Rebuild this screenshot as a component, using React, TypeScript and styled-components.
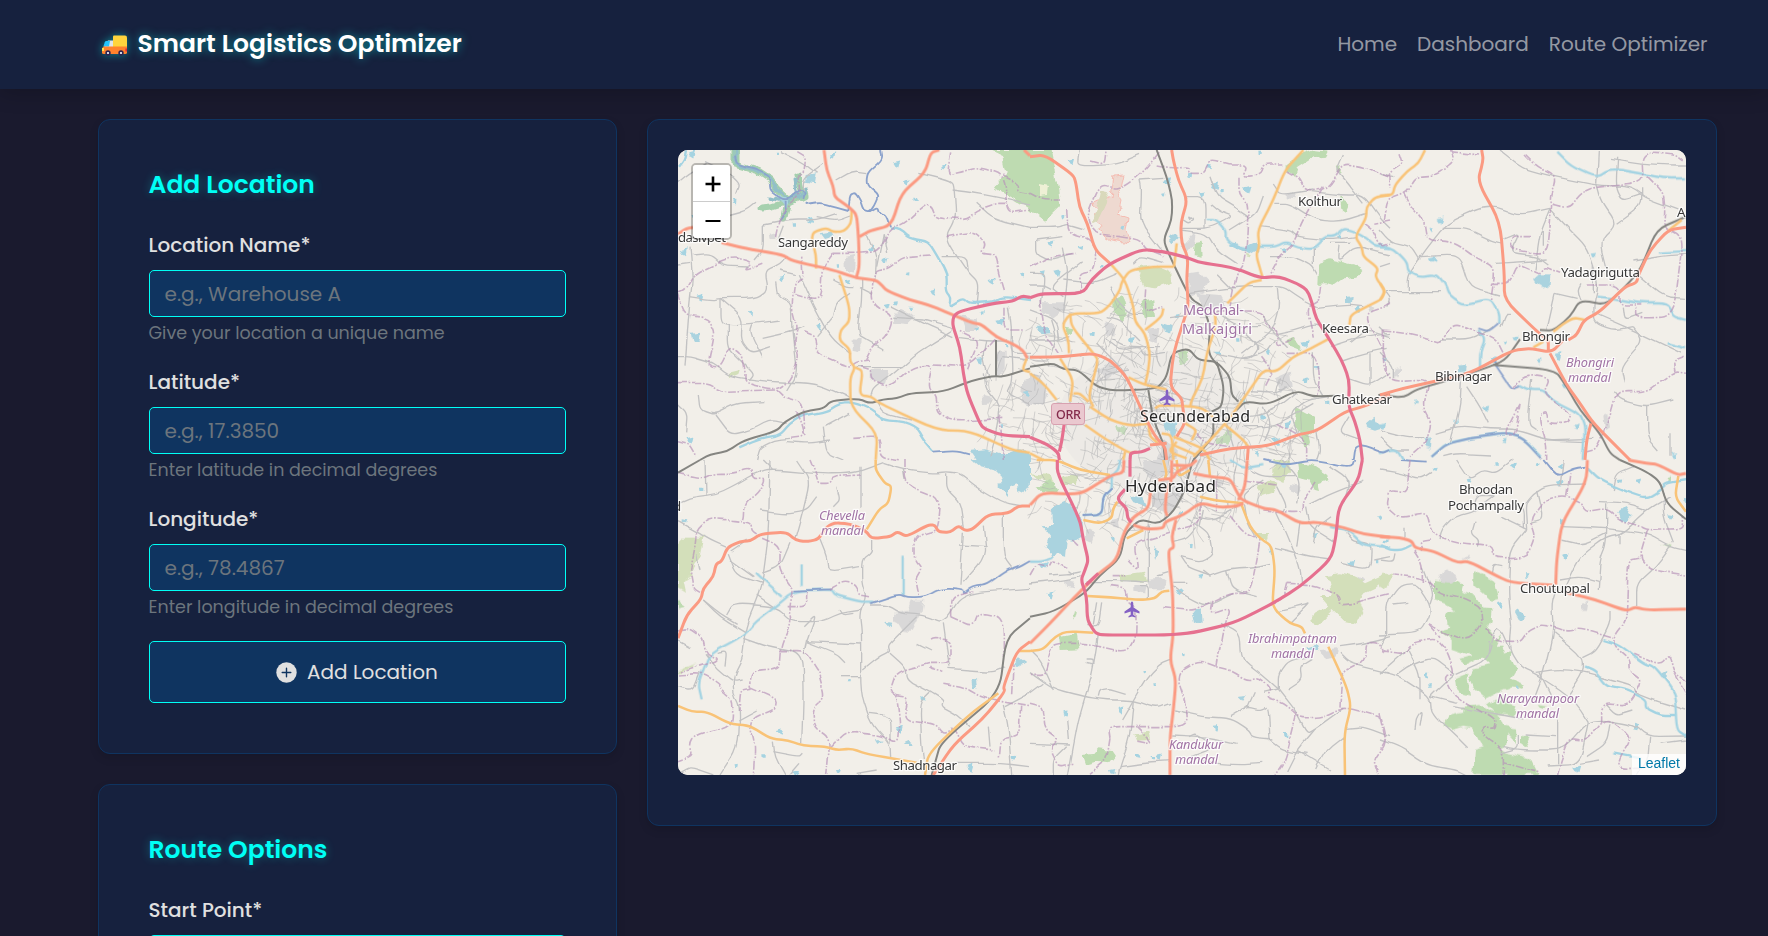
import React from 'react';
import styled, { createGlobalStyle } from 'styled-components';

const GlobalStyle = createGlobalStyle`
  *, *::before, *::after { box-sizing: border-box; }
  html, body { margin: 0; height: 100%; overflow: hidden; }
  body {
    background: #1a1a2e;
    color: #e0e0e0;
    font-family: Poppins, Inter, sans-serif;
    font-size: 20px;
    line-height: 30px;
  }
`;

const Page = styled.div`
  height: 936px;
  overflow: hidden;
  background: #1a1a2e;
`;

const Header = styled.header`
  display: flex;
  align-items: center;
  justify-content: space-between;
  height: 89px;
  padding: 0 60.5px 2px 101px;
  background: #16213e;
  box-shadow: 0 4px 20px rgba(0, 0, 0, 0.2);
`;

const Brand = styled.div`
  display: flex;
  align-items: center;
  gap: 9.5px;
  color: #fff;
  font-size: 25px;
  font-weight: 600;
  white-space: nowrap;
  text-shadow: 0 0 10px rgba(0, 255, 245, 0.5);
`;

const Truck = styled.svg`
  width: 27px;
  height: 24px;
  margin-top: 3px;
  filter: drop-shadow(0 0 4px rgba(0, 255, 245, 0.45));
`;

const Nav = styled.nav`
  display: flex;
  gap: 20px;
`;

const NavLink = styled.a`
  color: rgba(224, 224, 224, 0.64);
  white-space: nowrap;
`;

const Main = styled.main`
  display: grid;
  grid-template-columns: 519px 1070px;
  gap: 30px;
  align-items: start;
  padding: 30px 0 0 98px;
`;

const Column = styled.div`
  display: flex;
  flex-direction: column;
  gap: 30px;
`;

const Card = styled.section<{ $map?: boolean }>`
  padding: ${(p) => (p.$map ? '30px 30px 50px' : '50px')};
  background: #16213e;
  border: 1px solid #0f3460;
  border-radius: 12px;
  box-shadow: 0 4px 10px rgba(0, 0, 0, 0.12);
`;

const Title = styled.h2`
  margin: 0 0 30px -0.5px;
  color: #00fff5;
  font-size: 25px;
  font-weight: 600;
  line-height: 30px;
  text-shadow: 0 0 10px rgba(0, 255, 245, 0.3);
`;

const Field = styled.div`
  margin-bottom: 20px;
`;

const Label = styled.label`
  display: block;
  margin: 0 0 10px -0.5px;
  font-weight: 500;
`;

const Input = styled.input`
  display: block;
  width: 100%;
  height: 47px;
  padding: 0 14.5px;
  font: inherit;
  color: #e0e0e0;
  background: #0f3460;
  border: 1px solid #00fff5;
  border-radius: 5px;
  outline: none;
  &::placeholder { color: #6c757d; opacity: 1; }
`;

const Hint = styled.div`
  margin: 4px 0 0 -0.5px;
  height: 26px;
  color: #6c757d;
  font-size: 17.5px;
  line-height: 25px;
`;

const Button = styled.button`
  display: flex;
  align-items: center;
  justify-content: center;
  gap: 10px;
  width: 100%;
  height: 62px;
  padding: 0 1px 0 0;
  font: inherit;
  color: #e0e0e0;
  background: #0f3460;
  border: 1px solid #00fff5;
  border-radius: 5px;
`;

const Select = styled.div`
  height: 47px;
  background: #0f3460;
  border: 1px solid #00fff5;
  border-radius: 5px;
`;

const MapView = styled.div`
  position: relative;
  height: 625px;
  overflow: hidden;
  border-radius: 10px;
  background: #f2efe9;
`;

const MapDrawing = styled.svg`
  display: block;
  width: 1008px;
  height: 625px;
`;

const ZoomControl = styled.div`
  position: absolute;
  top: 13px;
  left: 13px;
  width: 41px;
  border: 2px solid rgba(0, 0, 0, 0.24);
  border-radius: 5px;
  overflow: hidden;
`;

const ZoomButton = styled.button`
  display: flex;
  align-items: center;
  justify-content: center;
  width: 100%;
  height: 36px;
  padding: 1px 0 0 2px;
  background: #fff;
  border: 0;
  & + & {
    height: 37px;
    padding-top: 2px;
    border-top: 1px solid #ccc;
  }
`;

const Attribution = styled.div`
  position: absolute;
  right: 0;
  bottom: 0;
  padding: 0 6px;
  background: rgba(255, 255, 255, 0.8);
  color: #0078a8;
  font: 14px/18px "Liberation Sans", sans-serif;
  padding-bottom: 3px;
`;

type Kind = 'boundary' | 'minor' | 'stream' | 'border' | 'rail' | 'secondary' | 'trunk' | 'motorway';

interface Sheet {
  x: number;
  y: number;
  forest: string[];
  scrub: string[];
  urban: string[];
  lake: string[];
  ponds: string;
  lines: Record<Kind, string[]>;
}

// Each sheet holds its geometry at three units per pixel, offset to its place on the map.
const sheets: Sheet[] = [
  {
    x: -8, y: -10,
    forest: ['958,30 1080,30 1080,206 1035,178 1015,168 975,140 1010,100 1000,50'],
    scrub: ['170,700 210,690 205,705 175,718'],
    urban: ['525,350 555,345 552,395 528,390', '545,598 572,600 570,640 545,635', '605,690 655,690 645,728 605,722', '690,510 735,530 715,550 670,545', '870,525 920,535 925,570 885,570', '300,285 320,280 318,300 302,300', '985,635 1004,635 1004,700 978,705', '1060,720 1080,715 1080,800 1055,790', '940,765 970,770 965,790 942,792'],
    lake: ['900,932 945,928 1000,945 1050,928 1080,945 1080,960 920,960', '452,280 480,275 488,290 465,297', '62,578 90,575 85,605 68,605', '320,165 355,180 345,210 330,190', '410,105 440,100 435,130 408,125'],
    ponds: '325,40 488,45 680,72 820,78 708,128 735,175 605,328 645,362 712,400 790,458 720,505 337,412 90,472 240,522 445,560 508,375 535,425 40,335 680,487 928,662 1010,620 1055,408 985,545 190,186 420,240 370,255 75,235 60,900 920,570 965,425 1000,855 1070,760 65,45 938,520 650,500',
    lines: {
      motorway: ['1080,472 1056,468 1028,484 970,490 868,514 850,530 848,556 870,622 880,700 892,760 932,856 950,870 1000,886 1080,890'],
      trunk: ['462,30 470,90 490,140 494,172 540,203 560,225 566,300 568,380 558,416', '808,30 782,38 765,98 694,160 664,256 600,272 568,290', '24,282 50,265 70,262', '155,308 225,325 340,345 365,362 490,390 560,414 615,420 630,430 650,452 720,480 775,494 850,525 905,548 935,553 980,592 1030,612 1060,632 1072,655', '1062,30 1080,47'],
      secondary: ['545,210 543,250 522,274 490,276 468,264 430,276 425,300 438,345 438,385', '508,405 538,500 538,545 512,570 508,600 540,628 540,665 555,682 540,715 542,800 622,880 617,960', '555,682 578,692 568,765 605,770 625,788 800,870 900,873 1025,930 1080,938', '1070,655 1057,690 1080,696'],
      rail: ['90,960 120,943 170,935 220,902 320,873 345,845 400,815 460,805 485,782 565,776 600,790 640,778 680,775 720,760 820,755 905,722 970,708 1000,710 1080,685', '978,708 978,600'],
      stream: ['660,265 690,268 720,295 775,305 800,345 830,400 830,450 845,470 840,500 880,475 900,490 970,485 1000,470 1080,480', '208,922 270,895 330,885 360,850 400,825 470,815 510,790 550,790 600,808 640,840 700,845 740,865 760,900 790,935', '45,30 40,60 24,80'],
      border: ['630,30 635,60 595,95 592,135 628,165 615,195 600,215 580,210 570,180 555,158 540,165 535,210', '410,195 455,188 500,200 535,210', '600,215 625,200 630,218 648,225 660,262', '790,935 860,930 900,940', '195,50 200,75 260,90 300,110 300,150 350,180 390,150 405,160 400,180', '350,180 350,210 330,240'],
      boundary: ['385,35 410,50 405,95 385,110 390,160 330,230 315,300', '845,40 835,105 880,95 920,80 1005,105 1010,220 1080,210', '1000,105 1050,130 1045,155 1080,160', '24,460 45,450 75,400 180,350 250,365 225,390 280,370', '24,460 45,525 115,535 138,580 115,680 150,685 180,620 215,640 225,690 225,730 320,750 360,720 385,650 370,610 380,560 365,500 375,420 400,410 395,350', '24,728 110,727 150,755 215,752 320,750', '400,575 435,590 440,640 540,682 560,665 600,660', '590,660 610,620 650,590 670,530 605,490 610,395 660,385 700,350 780,345', '490,340 460,380 455,470 430,480 370,462', '490,340 560,340 620,335 660,265 700,255 770,190 790,200 800,235 890,240 915,215 980,190 1005,190', '830,290 910,275 945,310 930,340 975,345 985,400 1000,450', '570,680 600,690 600,720 660,742 730,680 790,675 775,750 800,770 800,815 850,845 1000,835', '320,750 345,775 400,790 405,890 360,895', '550,895 630,890 630,950 690,960', '895,690 930,600 870,570', '1005,500 1005,570 1060,570', '380,820 395,850 405,890', '24,905 60,915 80,950', '990,830 1000,960', '790,675 900,680 980,590'],
      minor: ['105,65 180,100 210,130 200,155', '170,228 225,213 255,190', '180,185 150,160', '330,35 400,70 440,100', '455,75 400,115 400,160', '500,120 550,92 592,98', '745,100 845,125 850,150 855,240 825,295 895,400 925,430 918,500', '845,150 910,158 1000,175 1080,195', '920,190 970,235 1080,262', '620,380 630,330 640,280', '60,320 68,420 58,500 45,680', '68,345 120,340 160,375 240,378', '24,375 60,370', '60,470 130,480 150,475 260,475 295,450 285,395 330,375 350,350', '150,475 150,545 175,555 260,550 330,540', '150,475 215,530 210,600 240,640 300,620', '175,555 175,625 215,665 250,700 235,720', '385,400 430,500 480,590 540,640', '320,430 325,470 365,490 365,570 380,700 350,750', '275,595 365,575 400,560', '375,400 330,390', '24,650 60,650 130,670 180,710 300,725 435,730 520,765 545,780', '85,765 90,810 135,825 200,790 280,785', '135,825 180,885 245,870 300,840 350,850', '460,860 470,940 520,960', '465,860 540,820', '490,530 500,490 540,460', '490,530 440,590', '490,420 530,440 550,440', '575,416 575,480 565,560 570,590', '570,590 640,630', '760,540 850,565 850,570 770,620 740,640 660,710 610,745 602,770', '670,535 760,540', '660,500 740,540 850,590', '560,680 700,680', '280,255 280,330 255,360', '340,260 325,300', '280,255 360,240 440,240 500,220', '440,230 500,240 540,225', '610,460 570,440', '250,550 240,580 275,650', '24,790 55,820 50,880', '260,960 270,920 310,900 360,895', '350,905 420,910 480,900', '590,280 620,350 615,420', '870,590 950,600 1010,600', '24,130 60,100 110,70', '815,350 890,350 895,400', '650,340 640,280', '620,785 640,820 720,840', '1015,500 1025,560 1022,640 1080,640', '1000,650 1070,660', '940,700 945,745 990,800 985,860 960,950', '1025,600 1030,720 1010,760 1080,790', '950,600 940,660 960,720'],
    },
  },
  {
    x: 352, y: -10,
    forest: ['0,30 62,30 72,80 85,155 92,200 45,245 0,210', '488,310 515,305 518,350 485,345', '865,370 900,358 975,375 1000,390 985,410 940,415 912,435 885,430 862,432', '770,75 810,45 850,30 893,35 885,50 845,55 805,80 795,110 770,95', '335,485 370,478 375,530 345,540', '245,480 275,465 290,515 280,545 250,520', '440,640 470,630 475,660 455,672', '770,600 790,590 815,625 805,632 775,620', '798,800 855,830 855,870 835,885 840,910 820,920 812,880 795,860', '928,175 958,190 948,212 930,200', '555,900 595,870 605,895 590,920 560,915', '258,855 295,865 290,880 262,870', '105,560 130,565 125,585 105,580', '920,80 935,75 930,105'],
    scrub: ['312,385 370,375 420,395 425,430 380,445 345,440 330,410', '648,345 668,348 665,355 650,352'],
    urban: ['35,490 100,490 105,510 70,535 40,520', '478,400 505,395 535,430 520,455 480,470 475,440', '455,320 495,275 490,310 470,335', '200,690 245,665 260,700 225,725', '230,540 255,550 250,590 230,580', '350,570 385,565 380,610 355,600', '735,715 780,695 785,735 750,755', '0,700 30,710 55,760 35,800 0,790', '400,900 440,920 440,960 380,960', '770,160 800,165 795,178 770,175', '580,820 610,830 600,850 575,845', '1010,490 1030,500 1020,520', '500,460 570,465 590,500 520,510'],
    lake: ['595,315 615,308 645,325 680,310 685,330 660,345 640,335', '415,290 435,280 448,292 430,310', '14,560 60,562 60,580 28,582', '395,545 425,555 420,580 405,575', '1008,850 1030,830 1040,845 1058,865 1035,872 1012,865', '398,840 440,845 430,890 405,870', '948,470 968,468 965,492 948,492'],
    ponds: '570,155 515,162 410,125 480,108 555,140 690,40 540,80 60,315 100,232 80,398 215,380 275,265 650,150 925,290 980,510 860,680 825,610 770,855 700,830 640,780 565,640 440,530 125,65 150,320 35,400 620,600 715,635 830,725 185,585 305,600 890,790 680,940 740,905 400,160 760,330',
    lines: {
      motorway: ['0,473 36,461 158,461 185,418 240,370 335,328 400,335 470,352 510,368 610,382 690,414 745,409 800,430 832,450 845,485 858,535 890,585 935,660 958,720 956,800 975,845 990,900 997,960', '0,892 50,912 85,938 88,960', '103,850 95,905 88,935', '300,960 302,938 335,936 360,925'],
      trunk: ['0,50 45,45 130,105 138,130 148,200 172,250 195,330 240,370', '425,30 430,60 445,120 472,180 452,250 455,310 474,352 470,420 475,500 462,540 430,640 420,740 455,775 458,800', '0,652 100,650 190,640 240,660 290,710 330,800 375,890 405,920 410,960', '510,945 600,925 715,918 800,885 860,873 945,815 1000,800 1080,765', '655,920 652,960', '360,915 410,910', '440,890 465,850 458,800'],
      secondary: ['820,30 765,90 730,180 683,270 688,320 678,345 697,410', '1080,165 1035,172 1010,200 1008,235 975,290 995,320 1000,350 1045,385 1035,410 1065,450 1055,478 1010,500 962,525 958,555', '695,420 655,428 592,490', '555,520 557,560 530,640 518,715 485,780 480,800', '240,370 285,420 310,500 315,545 345,580 360,640 355,690 345,735', '432,380 370,380 300,390 275,425 270,450 240,495 210,520 120,520 97,555 115,600 117,640', '120,520 125,560 190,640 205,660 175,770 190,800', '90,655 130,720 120,785', '130,760 150,760 175,785', '0,700 40,730 80,780', '165,855 230,900 300,940 320,935', '180,800 240,840 300,857 355,850', '295,712 345,735 410,748', '375,805 390,795 510,800 550,830', '895,597 830,632 790,650 740,695 700,690 655,755 610,820 560,880 490,950', '440,310 432,380', '345,570 395,530 400,505', '580,850 640,900 655,920', '395,880 425,885 430,960', '430,890 520,925 540,960', '430,915 500,945', '465,850 500,870 485,900', '355,850 360,890 385,910', '0,940 40,960', '285,935 280,960', '440,905 415,935 470,955'],
      rail: ['0,680 70,670 100,688 145,690 200,740 250,752 350,748 385,742 410,710 425,640 475,625 505,660 560,665 600,710 605,765 625,785', '560,665 582,740 575,800 545,815', '380,30 410,110 427,180 425,240 400,300 420,350 480,475 520,500 540,560 535,640 565,680', '620,810 645,785 715,793 800,752 850,770 915,767', '490,960 550,890 550,850', '355,750 370,840 400,910 405,960', '1045,765 1080,763'],
      stream: ['530,240 560,240 590,270 590,300 620,320 660,325', '690,320 740,320 770,305 800,320 850,325 885,290 920,290 940,265 975,275 1010,295 1040,320 1080,325'],
      border: ['965,960 970,920 1000,915 1060,940 1080,930'],
      boundary: ['385,40 345,90 300,130 260,150 210,135 170,230 190,280 270,290', '380,75 430,85 480,80 475,100 520,100 540,60 600,75', '600,75 655,75 640,110 690,105 700,75 760,75', '630,110 630,160 655,190 650,310 640,370 620,400 600,500', '270,290 330,300 350,330 400,350', '770,90 805,110 825,155 895,145 940,70 1000,80 1080,110', '880,140 820,240 790,310 750,345 720,400', '1005,250 1030,270 1055,320 1080,310', '875,440 870,480 830,500 850,590', '560,520 650,515 700,520 705,560 740,570 735,620 790,590', '110,210 115,280 180,300 195,340 190,390 150,400 160,450 130,460', '0,380 60,350 140,340', '350,445 345,520 400,500', '30,480 45,580 85,640', '1080,490 1000,520 1065,640 1070,710', '710,740 730,700 690,650', '0,160 40,180 90,180', '740,850 830,900 830,960', '1080,240 1030,250', '180,60 220,70 225,30', '500,880 530,910 600,920', '770,640 850,640 870,700 860,770'],
      minor: ['150,30 145,70 170,75 260,70 330,40', '0,265 90,265 110,255 160,270', '20,300 20,340 60,360 130,340', '20,300 100,290', '0,435 40,435 60,445', '0,400 30,400 40,410 30,500', '0,510 80,540 90,600', '330,120 335,150 330,250 400,340', '330,120 400,115', '470,170 525,170 525,265', '455,265 540,265 610,230 570,215 540,190', '540,110 560,170 610,200 655,230', '700,165 680,220 600,270', '730,190 780,190 860,240 930,245 1010,220', '730,135 750,165 850,150', '845,155 935,165 1000,165 1050,235 1080,265', '940,45 920,90 945,120 1000,190', '690,260 780,270 800,290 900,300 975,290', '720,350 790,350 845,375 860,400', '850,325 850,375', '930,320 925,365 980,320 1080,345', '900,310 960,310', '480,460 600,445 640,440 700,440 760,440 810,475 860,500', '560,400 610,450', '745,445 750,500 730,570 640,640', '860,505 960,495 1000,500', '940,660 1000,640 1070,625', '740,580 790,570 850,550 880,560', '700,530 720,570 770,620', '900,620 960,600 1080,580', '850,640 850,720 880,770', '960,720 1020,740 1080,700', '1020,740 1020,640', '985,900 930,880 960,830', '860,870 870,930 860,960', '800,885 780,820 830,780 900,770', '660,755 740,760 770,740', '640,570 690,620 660,660 560,640', '420,530 500,520', '640,655 700,640 730,600', '200,740 230,700 300,690', '230,530 270,540 330,600', '100,420 190,430 260,400', '100,320 115,400 100,520', '240,440 260,480 300,520 340,520', '310,370 330,350 400,370', '155,365 60,440 100,470', '700,800 720,850 700,900', '610,830 680,830 750,800 800,760', '450,270 530,280 560,330 620,370', '480,240 475,230 490,240 475,250 460,240', '1080,590 1010,570 960,610', '560,520 620,560 690,560', '590,850 610,920', '640,860 730,860 850,790', '405,640 340,650 330,620 270,630 230,600', '200,610 270,680 290,710', '65,540 80,590 60,650', '0,600 80,600 115,590', '300,760 380,780 380,850', '250,600 290,620 390,620'],
    },
  },
  {
    x: 702, y: -10,
    forest: [], scrub: [],
    urban: ['50,690 60,685 60,710 45,715', '670,830 685,825 690,860 675,870'],
    lake: ['462,420 480,403 508,403 505,440 490,445 470,432', '232,680 258,675 255,695 235,698', '133,898 155,895 153,925 138,920'],
    ponds: '470,605 640,352 537,650 475,662 590,860 108,790 320,805 5,860 12,655 338,655 375,608 878,948 180,240 152,272 548,738 228,842 405,595 160,358 370,900',
    lines: {
      motorway: [],
      trunk: ['305,30 310,60 293,125 360,245 373,400 373,480 475,578 505,600 505,630', '918,262 865,270 810,330 775,405 770,428 735,440 660,515 612,540 590,585 565,600', '0,765 70,745 160,725 270,700 395,632 450,625 515,637 550,600', '510,640 560,735 600,790 640,850 750,960', '633,850 620,900 615,960'],
      secondary: ['135,30 115,70 80,95 45,135 38,165 0,167', '0,430 15,455 0,480', '905,240 865,272', '615,540 580,533 545,555 520,575', '460,622 490,605'],
      rail: ['918,230 830,268 785,380 755,420 680,495 600,480 570,530 520,572 480,570', '0,765 70,773 110,748 200,722 300,690 375,662 420,598', '340,675 525,690 560,740 600,810 660,880 690,940 720,960'],
      stream: ['0,315 40,325 80,365 85,395 120,412 170,405 195,435 205,465 250,495 330,475 355,520 355,550', '295,570 315,600 300,640 300,680', '535,35 575,75 650,110 690,85 780,100 850,115 918,115', '420,735 450,750 490,750 520,780 600,820 615,860 608,960', '0,940 50,925 70,960', '155,950 200,910 270,895 380,880 430,895 485,950', '650,470 700,475 780,490 860,490 880,530 918,540', '840,335 918,330', '860,610 918,625'],
      border: ['355,550 325,575 295,565', '340,665 370,710 395,745 420,735', '270,895 380,880 430,895 485,955', '155,950 200,912 270,895'],
      boundary: ['215,30 225,60 170,105 110,110 80,160 20,180 10,240', '75,160 95,200 130,235 140,300 220,305 290,355 350,380 335,480', '210,35 300,45', '435,45 470,80 530,110 505,190 565,205 600,160 640,142 790,130 785,35 880,40 905,60', '800,110 850,160 855,210 850,260 910,290 880,530 770,535 770,500', '515,195 505,315 490,345 390,330 395,290 450,290', '335,430 385,430 410,370 455,390 480,400 495,380 540,400', '10,570 65,575 130,590 185,610 220,550 290,575 350,600 370,640', '10,570 10,690 40,725 150,720 130,800 155,850 135,910 90,950', '395,740 445,705 510,715 490,760 575,820 560,850 505,850 500,815 475,830 500,910 500,960', '420,795 375,885 405,890 420,795', '615,940 650,930 690,830 710,755 800,755 850,720 885,695 918,700', '620,435 720,435 720,495 790,495', '60,40 70,70 25,100 30,140', '885,695 880,665 918,650'],
      minor: ['360,30 430,85 500,105 600,125 650,135 750,140 800,175 895,210', '655,30 650,130', '710,50 705,140 725,180 785,160', '690,55 780,70 870,75 918,75', '650,130 665,185 710,250 660,300 685,400', '710,250 785,195 785,145', '0,270 30,305 95,320 120,360', '85,450 85,405 140,325 200,250 300,205 350,200 420,225 510,205', '185,265 260,265 330,300 365,310', '370,300 420,280 390,340 470,350 505,375', '15,455 180,455', '510,205 560,260 620,320 640,375', '510,205 480,280 465,385', '490,270 490,320', '120,350 220,345 245,360 270,440 360,465', '525,460 500,570', '525,460 590,475', '640,375 655,440 640,500 645,550 700,570 760,560', '655,525 780,580 905,640', '775,405 850,470 918,475', '760,360 850,345 918,340', '730,500 735,540 790,520', '760,560 790,600 720,680 730,730', '0,640 40,680 40,715', '245,700 240,800 210,910', '260,740 300,800 325,850', '0,870 80,890 130,890', '170,880 240,860 330,870 410,870 500,900 620,905', '500,900 640,895', '700,755 720,780 800,800 880,780', '800,795 800,890 835,930', '870,880 870,950', '190,950 230,940 330,945', '0,890 40,930 90,930', '0,560 20,580', '360,560 375,520 390,520', '0,380 30,370', '20,500 30,480 15,460', '600,430 590,450 600,480', '350,370 500,360', '640,375 640,460', '455,720 440,850 470,870', '0,100 40,110', '340,560 280,600 180,600'],
    },
  },
  {
    x: -8, y: 310,
    forest: ['24,420 46,440 24,445'],
    scrub: ['38,233 100,233 88,290 60,335 70,345 38,365 45,398 24,385 24,260', '24,635 80,610 55,632 30,640'],
    urban: ['672,462 712,452 722,424 760,424 755,455 720,518 700,515 685,490 672,485'],
    lake: ['908,0 1080,0 1080,70 1060,100 1045,92 1040,70 1018,80 1010,108 985,75 1000,55 975,30 930,18', '645,485 668,488 662,505', '905,670 918,660 922,690 908,690', '1035,610 1050,595 1065,605 1045,618', '35,175 55,178 50,190 35,188', '700,855 720,845 735,855', '615,840 635,842 622,852'],
    ponds: '285,885 505,930 900,922 200,915 378,940 540,662 1028,895 688,808 760,715 330,818 95,88',
    lines: {
      motorway: [],
      trunk: ['24,535 50,465 93,418 100,385 130,350 138,312 156,303 172,262 210,245 243,242 272,222 348,216 378,241 410,245 445,238 470,200 495,188 540,192 585,210 605,236 660,230 682,215 710,230 775,194 795,196 805,215 840,218 865,197 885,212 908,208 955,163 1015,160 1045,138 1080,138', '1080,545 1040,575 1000,680 1005,695 940,775 850,855 790,945'],
      secondary: ['617,0 617,30 645,70 665,78 655,130 627,148 590,208', '24,738 65,755 110,755 180,792 240,797 300,835 355,842 400,857 465,860 500,870 545,866 590,882 740,908', '985,700 900,762 775,880 765,945', '1045,573 1080,573'],
      rail: ['24,38 90,0', '1080,475 1008,535 988,700 812,848 795,910 785,945'],
      stream: ['95,715 85,670 105,620 120,580 215,530 260,480 320,435 370,392 485,388 495,405 570,425 610,425', '395,310 395,375', '698,290 698,405', '255,338 290,370 335,410'],
      border: ['370,392 485,388', '600,430 685,402 710,412 770,410 815,385 875,390 882,402 910,380 950,375 1010,330 1045,320 1080,300'],
      boundary: ['24,40 100,55 130,40 190,40 240,25 250,60 285,55 265,100 225,130 222,185 180,180 120,175 80,210 75,260 60,330 70,385 95,400', '222,185 245,190 250,220 330,255 330,330 370,385 355,440 365,490 335,560 330,625 250,632 240,680', '420,0 440,50 445,70 480,70 490,50 570,45', '705,0 705,60 735,85 810,115 800,210 735,230 735,300 755,325 735,360 745,410', '480,390 520,368 555,375 570,405 600,410', '350,440 410,440 410,395', '24,510 60,505 95,530 105,580 150,600 30,635', '24,645 95,640 150,670 155,690 190,720 185,800 80,825 60,855 68,890 24,905', '330,575 410,575 435,620 450,640 468,710 430,745 430,800 480,835 470,945', '240,680 320,715 315,745 250,770 240,800 255,860 250,945', '480,865 530,815 630,825 685,850 690,790 680,710', '845,470 845,410 910,395', '845,470 910,500 925,460 1000,475 1000,600', '780,540 790,535 840,540 840,610 780,610', '780,620 780,630 820,640', '680,710 660,695 680,635 780,610', '680,710 715,715 700,780 800,795 820,820 850,800 880,860 970,870', '820,670 880,680 940,715 1080,740', '1055,740 1050,830 990,835 985,890', '245,685 215,690 210,750', '1030,600 1025,700'],
      minor: ['300,0 295,230 275,380 225,500 220,590 190,650 190,700 210,740 205,860 150,945', '105,0 108,110', '24,130 60,115 140,105 200,75 250,45 300,28 450,42 550,40 640,8', '24,185 80,215 120,240 170,262', '450,240 470,290 475,335 570,320', '270,150 350,160 410,150 440,110', '570,20 570,145', '490,140 510,120 500,80', '380,0 420,60 400,150 375,240', '605,240 605,275 578,295 578,370 592,410 568,460 575,520 575,700 605,790 660,850 662,895', '175,280 200,345 275,370', '275,340 330,320 360,250', '100,420 150,470 225,515', '100,420 150,460 200,490', '170,465 190,430 320,440 360,485 455,485 510,460 575,450', '260,405 310,440', '410,545 440,460 400,500', '410,545 575,552', '410,545 500,580 525,605', '220,535 290,560 395,580 400,700 395,850', '400,585 410,540', '580,630 630,590 660,575 655,560 660,550 740,470', '660,580 705,620 710,660 780,695 820,720 815,740 870,770 900,800', '600,435 650,435 690,460 760,465 820,490 880,400 1080,385', '820,490 835,600 840,620', '835,625 960,635 1000,620', '780,700 750,730 755,850 760,900', '880,215 870,380', '870,255 950,260', '940,200 950,290 880,370', '1000,170 1000,290 1030,330', '640,10 700,30 790,40 830,35 870,40 920,80 1005,130 1080,140', '830,40 830,90 870,130 880,205', '705,60 700,30', '1000,735 1015,800 1025,945', '24,680 70,690 90,640', '24,540 60,560', '105,580 140,625 190,665 215,660', '140,580 170,575 165,620', '310,845 315,890 345,945', '310,875 390,890 400,880', '24,940 60,920 130,945', '205,780 260,750', '360,945 390,910', '560,940 620,930', '860,910 1000,910 1080,920', '955,800 960,860', '740,550 780,570', '510,650 575,650', '640,770 660,780 660,850', '600,760 640,765', '510,450 520,465 550,460', '1005,740 1080,700', '280,0 310,30', '80,280 90,330', '180,300 250,350', '185,270 230,240'],
    },
  },
  {
    x: 352, y: 310,
    forest: ['798,8 845,15 892,45 895,60 865,70 870,90 850,85 838,60 805,55', '90,528 140,518 148,568 95,570', '155,885 190,882 205,865 245,870 255,885 235,910 200,905 165,915', '20,80 60,60 90,85 80,100 30,92', '125,465 138,455 130,485'],
    scrub: ['730,0 780,0 782,35 755,62 730,50', '680,75 720,62 742,68 735,95 695,108', '885,345 930,340 975,350 1005,370 1060,345 1080,350 1040,380 1000,400 985,420 1000,460 985,490 940,480 910,450 870,490 840,480 860,460 900,440 870,405 905,405 900,370', '310,820 355,815 360,840 318,842', '100,55 140,45 135,75 105,75', '0,40 60,45 70,65 20,60', '270,345 345,335 355,365 270,365', '680,225 715,225 710,240 685,240'],
    urban: ['165,205 195,215 185,250 165,240', '370,80 410,60 460,90 450,130 410,160 370,140', '245,180 265,175 270,205 250,200', '350,360 395,355 410,365 395,385 360,385', '980,350 1000,360 995,390 980,385', '310,375 350,375 345,400 310,395', '870,570 925,565 915,590 885,595', '105,360 130,365 125,385 108,380', '540,50 580,60 570,85 545,80', '780,75 815,80 805,105 785,100', '340,0 420,0 410,50 350,55'],
    lake: ['65,145 108,125 130,150 155,175 155,230 130,245 110,240 105,290 85,285 65,298 50,260 60,230 38,200 70,190', '488,455 515,448 518,485 495,492', '825,560 860,550 868,575 835,572', '300,115 340,110 350,140 310,130', '370,260 385,270 375,298', '625,710 650,708 640,725', '715,265 725,270 722,292'],
    ponds: '345,635 108,762 60,405 485,255 510,350 375,675 250,235 40,315 555,802 1050,175 370,890 245,935 445,395 458,585 855,225 770,830 450,160 270,750 320,890 390,890 1040,305 760,20 965,310',
    lines: {
      motorway: ['82,0 82,40 150,180 160,240 175,300 165,330 153,360 170,410 172,480 195,518 215,525 460,525 610,490 720,435 810,380 903,298 918,230 926,140 985,60 997,0', '300,0 300,50', '285,88 265,110 266,122 290,145 293,175 304,187', '205,340 168,375'],
      trunk: ['0,550 60,490 130,415 200,345 260,300 280,220 310,170 355,145 362,95', '0,135 35,98 150,103 205,70 245,45 280,38 282,0', '412,168 405,150 410,90 425,60 425,0', '310,195 345,207 400,205 405,185 460,165 510,128 570,142 620,138 640,130', '490,40 540,50 600,55 620,95 635,120 700,145 740,150 810,190 860,186 940,202 1000,222 1080,232', '652,0 645,80 625,120', '438,180 425,230 432,262 416,270 418,310 428,400 430,520 420,600 438,660 430,750 420,830 420,945', '430,15 480,18 500,0', '385,60 430,55 440,35 470,20'],
      secondary: ['160,180 210,190 245,175 250,145 262,125', '0,573 40,568 75,530 110,514 190,518', '172,408 240,412 330,420 375,415 395,395 418,392', '20,0 80,0 150,30 240,45', '510,110 560,122 640,130', '635,135 660,200 690,235 725,258 735,330 727,430 740,455 780,490 815,500 825,520', '895,560 950,680 963,740 943,820 945,945', '290,235 340,210', '400,0 410,40 405,55', '440,0 445,50 480,30', '535,0 540,50'],
      rail: ['0,470 70,455 165,400 210,345 270,295 285,220 330,178 385,192 430,155 465,90 480,30 490,0'],
      stream: ['0,302 40,302 70,290', '900,200 960,215 1000,255 1080,262', '230,60 265,30 270,0', '600,0 640,25 700,15', '155,165 215,162 220,110 245,90 245,45'],
      border: ['155,165 215,162 220,110 248,85', '700,0 770,15 850,0 960,25 970,0'],
      boundary: ['0,345 20,310 60,320 70,300 110,320', '130,240 150,260', '245,380 285,385 290,420 315,440 315,530 290,575 180,550 80,550 60,570 45,640 0,640', '245,350 290,350', '0,730 40,740 45,810 85,840 60,865 85,920 130,910', '240,835 235,800 345,800 470,800 465,720 438,640 505,600 560,620 600,630 650,660 690,655 725,690 710,715 760,730 810,775 880,770 940,740 1050,770', '560,620 580,500 600,440 540,460 545,430', '320,800 370,850 320,840', '400,440 500,450 600,400 660,400 680,300 690,240', '770,370 860,375 930,410 930,440 1080,400', '800,760 765,900 735,945', '930,740 935,640 1005,605 1005,545 1045,545 1055,580 1080,570', '510,130 510,190 440,210', '420,220 310,250 325,330 295,300', '600,170 640,220 680,240', '700,150 820,160 820,120 860,60', '1050,770 1070,850 1030,900 1045,945', '640,60 740,75', '240,835 230,900 180,940', '770,370 760,410 720,430', '560,60 560,150'],
      minor: ['0,372 70,365 155,350', '60,345 130,340 155,335', '0,635 70,685 165,710 230,720 310,720 380,745 420,730', '205,520 200,560 185,650 165,710 145,780 130,860 115,945', '172,490 205,500 215,430', '200,430 190,490', '310,720 350,650 390,610 420,598', '310,720 300,830 270,920 265,945', '310,720 275,780', '205,710 210,690 240,685 290,700', '170,600 190,600 190,615 170,610', '0,850 120,855', '110,780 115,840', '430,750 520,770 600,775 655,810 670,835 730,840', '600,770 650,740 690,750 715,740 720,840', '270,920 340,910 420,905', '430,825 530,830 620,850', '510,905 620,915 700,910', '470,170 510,200 540,225 550,280 510,305 450,290', '510,200 520,150', '430,380 470,410 530,440 610,400', '450,290 470,320 540,345', '540,345 600,325 680,320 720,310', '590,330 605,390 680,410', '640,130 650,190 680,240', '740,155 770,220 810,320 815,370', '735,265 830,290 900,300', '810,185 800,260', '900,170 860,200 850,250', '930,310 1020,330 1025,250 970,245 950,220', '1030,300 1080,290', '570,490 630,520 635,600 700,650 745,690', '745,690 745,640 775,600 850,590', '745,690 800,760 830,820 850,810 940,745', '770,690 815,660 810,620 850,595', '700,700 745,690', '930,560 1000,550 1080,530', '930,580 960,610 1080,640', '940,830 890,870 860,930', '945,805 1000,800 1080,830', '850,810 800,870 770,930', '800,870 900,930', '720,840 760,870 830,880', '510,0 490,40', '355,190 355,370', '330,380 355,380 355,420', '170,365 300,365 350,370', '380,345 415,335', '475,370 430,370', '740,455 830,435 840,430 780,490', '0,570 30,600 70,690', '540,345 545,350 520,330', '500,205 470,240 430,250', '440,110 500,60', '620,140 550,180 490,170', '840,130 900,100 1000,60', '660,30 700,50 800,50', '900,20 960,60 940,130', '800,130 810,60 760,0', '740,80 770,140 760,160', '480,830 500,820 560,860 480,890', '670,700 650,745', '0,700 40,670', '70,945 70,900 110,860', '750,590 830,580', '700,60 640,100 650,130', '830,140 840,200 920,250', '110,330 130,345'],
    },
  },
  {
    x: 702, y: 310,
    forest: ['165,365 210,372 235,358 255,375 250,395 290,415 310,445 338,450 335,480 322,505 350,540 368,520 350,560 370,560 375,580 395,575 392,600 410,630 395,655 435,680 430,692 390,685 350,700 320,715 280,680 268,650 280,625 330,615 305,590 260,615 240,600 275,590 215,570 215,540 180,515 215,505 195,490 200,460 225,455 205,435 165,420', '280,330 345,365 358,420 335,425 280,375', '225,655 262,638 265,670 270,710 250,705 228,680', '250,740 300,735 365,775 375,800 405,805 408,848 380,820 375,860 330,875 300,850 280,805 250,800 220,810 190,795 205,765 250,755', '320,735 360,705 410,740 400,770 345,765', '285,870 340,855 380,880 450,895 475,945 280,945', '420,828 455,830 440,858 420,845', '845,250 875,250 870,260', '470,735 505,740 480,748', '860,55 875,50 872,68'],
    scrub: ['0,345 35,345 38,360 10,385 0,380'],
    urban: ['175,350 205,325 228,350 222,372 185,372', '600,430 622,425 618,450 600,450', '250,290 270,285 265,300'],
    lake: ['712,160 740,138 758,165 735,188 720,175', '402,460 420,450 438,468 418,488', '762,785 778,790 775,808 762,805', '848,640 862,632 860,652 848,652', '862,160 882,162 878,175 865,175', '908,110 918,112 918,130'],
    ponds: '348,15 265,60 400,22 475,12 540,18 440,345 140,645 590,928 20,245 360,435 150,675 545,185 552,290 720,62 780,62 410,687 165,28 538,70',
    lines: {
      motorway: [],
      trunk: ['0,230 60,233 95,243 105,264 160,273 232,308 265,303 350,348 395,368 520,375', '560,398 640,417 740,453 765,441 800,450 918,447', '622,0 620,50 605,90 545,190 530,300 527,375', '745,0 800,10 830,12 895,45 918,40'],
      secondary: ['895,48 885,110 918,155'],
      rail: ['720,0 800,35 840,65 860,130 918,178'],
      stream: ['625,25 660,60 740,95 800,115 840,90 860,70 918,60', '0,255 30,270 65,270 95,255', '670,540 720,555 790,610 820,618 870,680 885,710 890,810 918,828', '615,622 645,635 680,680 740,690 800,720 800,745 840,765 885,765', '703,880 780,895'],
      border: ['490,0 530,50 580,25 620,20', '60,0 140,5'],
      boundary: ['90,0 80,100 30,90 20,140 60,175 140,155 155,220 190,235 250,250 335,255 345,295 440,290 465,230 450,180 490,125 550,108 600,125 620,155 680,145 720,180 770,195 800,210 910,210 910,170', '800,210 775,295 815,330 918,345', '775,295 745,300 740,450 735,490 705,530 705,560 750,600 750,630 790,660 740,740 680,730 665,750', '0,575 70,585 90,550 170,535 200,570 225,640 190,645 205,690 240,720 350,780 345,810 310,800 310,830 370,870 370,945', '150,495 260,545 310,500 305,440 240,410 180,400 135,355 40,345', '150,495 180,530', '105,270 130,310 130,370', '320,505 350,545 420,548 445,510 485,492 560,515 600,505 700,535', '530,945 540,900 565,838 620,845 680,770 760,830 720,900 720,925 800,925', '665,790 665,755', '150,240 120,245 125,270', '760,580 840,615 870,580 885,640 918,660', '0,760 20,835 0,870', '560,110 570,40', '885,640 918,700', '370,905 480,935'],
      minor: ['150,40 120,60 60,40 0,30', '75,200 75,230', '180,240 190,205 225,170 280,155 340,110', '295,260 300,240 275,220 285,185', '360,170 440,208', '440,208 435,130 460,100 500,75 615,72', '430,205 430,150 400,120', '440,208 390,270 385,400 395,500', '560,375 600,290 680,230 730,220 800,150 870,110', '660,125 740,128 800,150', '545,200 680,205 800,220 870,260 918,272', '680,130 680,250 660,300 655,390', '545,240 610,255 680,220', '770,435 770,370 830,315 870,260', '530,380 515,430 520,515 490,640 460,720', '520,515 610,590 610,640 560,715', '610,590 650,570 690,490 690,450', '540,360 600,350 655,365', '395,500 390,570 425,625 470,645 540,690 590,730 625,785', '470,640 540,630 620,640 760,680 770,700', '320,590 345,500 370,520 390,570', '0,635 50,645 150,710 155,760 230,830 260,860', '50,645 100,610 160,590 200,620 225,640', '225,640 150,710 155,715', '230,640 320,600 325,540', '120,715 120,640 85,570', '0,525 120,520 150,470 150,430 110,370 60,375 20,430 20,520', '40,435 85,430', '0,300 40,305 45,280', '130,320 160,400 150,430', '0,840 60,860 140,915 230,930 260,945', '370,860 430,870 550,870 625,785 670,780 760,795 800,830 918,828', '415,825 415,865 360,880', '440,825 525,830', '530,770 530,910', '625,785 600,910 500,915', '600,910 660,900', '806,830 800,900 770,945', '840,850 918,840', '680,735 710,765 760,750', '540,80 550,0', '470,90 490,180 450,190', '400,0 350,40 310,30 270,60 230,0', '340,110 290,110 280,155', '370,320 345,315 340,340', '700,90 710,40 760,20', '850,100 850,170 880,250', '690,790 680,850 620,890', '0,560 20,520', '105,810 110,770 128,750 120,800', '230,730 150,710', '220,740 350,765 430,780', '770,700 820,720 918,750', '720,220 720,250', '0,640 90,560', '480,640 520,720'],
    },
  },
];

const strokes: Record<Kind, { color: string; width: number; dash?: string; opacity?: number }> = {
  minor: { color: '#c2c2c3', width: 4 },
  boundary: { color: '#b793b9', width: 4.8, dash: '24 5 5 5', opacity: 0.68 },
  stream: { color: '#a3d3e2', width: 7 },
  border: { color: '#8ba2cc', width: 5.5 },
  rail: { color: '#858581', width: 6 },
  secondary: { color: '#f9c377', width: 7.6 },
  trunk: { color: '#fb9a82', width: 9 },
  motorway: { color: '#e6708f', width: 9.5 },
};

const lineOrder: Kind[] = ['minor', 'stream', 'border', 'boundary', 'rail', 'secondary', 'trunk', 'motorway'];
const rough: Kind[] = ['minor', 'stream', 'border', 'boundary'];

// Rounds the corners of a route while keeping its straight runs.
const route = (points: string) => {
  const p = points.split(' ').map((s) => s.split(',').map(Number));
  let d = `M${p[0][0]} ${p[0][1]}`;
  for (let i = 1; i < p.length - 1; i += 1) {
    const [ax, ay] = p[i - 1];
    const [x, y] = p[i];
    const [bx, by] = p[i + 1];
    const t = 0.35;
    d += `L${x + (ax - x) * t} ${y + (ay - y) * t}Q${x} ${y} ${x + (bx - x) * t} ${y + (by - y) * t}`;
  }
  const end = p[p.length - 1];
  return `${d}L${end[0]} ${end[1]}`;
};

// Residential streets: short bent segments, densest around the city centre.
const streets = (() => {
  let seed = 17;
  const rnd = () => {
    seed = (seed * 1103515245 + 12345) % 2147483648;
    return seed / 2147483648;
  };
  let d = '';
  for (let i = 0; i < 560; i += 1) {
    const a = rnd() * Math.PI * 2;
    const r = Math.pow(rnd(), 0.7);
    let x = 462 + Math.cos(a) * r * 165;
    let y = 258 + Math.sin(a) * r * 125;
    let dir = (rnd() > 0.5 ? 0.3 : 1.87) + (rnd() - 0.5) * 0.6;
    d += `M${x.toFixed(1)} ${y.toFixed(1)}`;
    for (let k = 0; k < 3; k += 1) {
      const len = 3 + rnd() * 8;
      x += Math.cos(dir) * len;
      y += Math.sin(dir) * len;
      dir += (rnd() - 0.5) * 1.1;
      d += `L${x.toFixed(1)} ${y.toFixed(1)}`;
    }
  }
  return d;
})();

const shape = (points: string, fill: string, key: React.Key) => <polygon key={key} points={points} fill={fill} />;

interface PlaceProps {
  x: number;
  y: number;
  w: number;
  size?: number;
  color?: string;
  italic?: boolean;
  children: string;
}

const Place = ({ x, y, w, size = 13.3, color = '#383838', italic, children }: PlaceProps) => (
  <text
    x={x} y={y} textLength={w} fontSize={size} fill={color}
    fontStyle={italic ? 'italic' : 'normal'} fontWeight={450}
    stroke="#fff" strokeOpacity={0.75} strokeWidth={2.6} paintOrder="stroke" strokeLinejoin="round"
  >
    {children}
  </text>
);

const Plane = ({ x, y }: { x: number; y: number }) => (
  <path
    transform={`translate(${x} ${y})`}
    fill="#8461c4"
    d="M0-7.5c.9 0 1.3 1.1 1.3 2.2v3.6L7.5 2.5v1.9L1.3 2.6v3.1l2.2 1.5v1.2L0 7.6l-3.5.8V7.2l2.2-1.5V2.6l-6.2 1.8V2.5l6.2-4.2v-3.6c0-1.1.4-2.2 1.3-2.2z"
  />
);

const purple = '#a173a5';

const CityMap = () => (
  <MapDrawing viewBox="0 0 1008 625" fontFamily='"Noto Sans", sans-serif'>
    <defs>
      <filter id="ragged" x="0" y="0" width="1008" height="625" filterUnits="userSpaceOnUse" colorInterpolationFilters="sRGB">
        <feTurbulence type="fractalNoise" baseFrequency="0.09" numOctaves="2" seed="4" />
        <feDisplacementMap in="SourceGraphic" scale="8" xChannelSelector="R" yChannelSelector="G" />
      </filter>
      <filter id="winding" x="0" y="0" width="1008" height="625" filterUnits="userSpaceOnUse" colorInterpolationFilters="sRGB">
        <feTurbulence type="fractalNoise" baseFrequency="0.045" numOctaves="1" seed="9" />
        <feDisplacementMap in="SourceGraphic" scale="7" xChannelSelector="R" yChannelSelector="G" result="bent" />
        <feGaussianBlur in="bent" stdDeviation="0.35" />
      </filter>
    </defs>
    <rect width="1008" height="625" fill="#f2efe9" />
    <g filter="url(#ragged)">
      {sheets.map((s, i) => (
        <g key={i} transform={`translate(${s.x} ${s.y}) scale(.33333)`}>
          {s.urban.map((p, k) => shape(p, '#d9d8d8', `u${k}`))}
          {s.scrub.map((p, k) => shape(p, '#d3dfba', `s${k}`))}
          {s.forest.map((p, k) => shape(p, '#bedbb1', `f${k}`))}
        </g>
      ))}
      <g fill="none" strokeLinejoin="round" strokeLinecap="round">
        <path d="M57 0V14L80 21 92 29 98 39 110 50M120 26L126 45 110 52 94 57 83 58M110 50L106 67" stroke="#a6d0ae" strokeWidth="7" />
        <path d="M57 0V14L80 21 92 29 98 39 110 50 124 44 129 38M92 47L110 52M117 30L120 48" stroke="#92bfc8" strokeWidth="3" />
      </g>
      <path d="M437 27l10-1-3 15-4 5 4 7-3 14 9 3-2 13 5 12-18-3-14-9 4-6-9-12 6-2-8-7 9-4 3 3 8-6z" transform="translate(-1 -2)" fill="#eed9d0" stroke="#f5b3a8" strokeWidth=".8" />
      <path d="M423 41l8 2-3 10-8 17-6 3 2-13 5-8z" fill="#d9d9bb" />
      <path d="M361 34l9 2-1 8-8 1z" fill="#eef0d5" />
    </g>
    <ellipse cx="475" cy="270" rx="95" ry="70" fill="#dcdbd9" opacity=".22" />
    <path d={streets} fill="none" stroke="#b2b2b4" strokeWidth=".9" opacity=".6" />
    <g filter="url(#ragged)">
      {sheets.map((s, i) => (
        <g key={i} transform={`translate(${s.x} ${s.y}) scale(.33333)`}>
          {s.lake.map((p, k) => shape(p, '#aad3df', k))}
          {s.ponds.split(' ').map((p, k) => {
            const [x, y] = p.split(',').map(Number);
            const r = 5 + ((k * 7) % 5) * 1.4;
            return shape(`${x - r},${y - 5} ${x + r},${y - r} ${x + 5},${y + r} ${x - 4},${y + 5}`, '#a5d3e1', `p${k}`);
          })}
        </g>
      ))}
    </g>
    {lineOrder.map((kind) => {
      const st = strokes[kind];
      return (
        <g
          key={kind} fill="none" stroke={st.color} strokeWidth={st.width} strokeDasharray={st.dash}
          opacity={st.opacity} strokeLinejoin="round" filter={rough.includes(kind) ? 'url(#winding)' : undefined}
        >
          {sheets.map((s, i) => (
            <g key={i} transform={`translate(${s.x} ${s.y}) scale(.33333)`}>
              {s.lines[kind].map((p, k) => <path key={k} d={route(p)} />)}
            </g>
          ))}
        </g>
      );
    })}
    <Plane x={489} y={247} />
    <Plane x={454} y={459} />
    <rect x="373.5" y="253.5" width="33" height="21" rx="2.5" fill="#eac8cf" stroke="#d8a1b0" />
    <text x="378" y="269" textLength="25" fontSize="12.5" fontWeight="500" fill="#842b4b">ORR</text>
    <Place x={0} y={92} w={48}>dasivpet</Place>
    <Place x={100} y={97} w={70}>Sangareddy</Place>
    <Place x={620} y={56} w={44}>Kolthur</Place>
    <Place x={883} y={127} w={79}>Yadagirigutta</Place>
    <Place x={999} y={67} w={9}>A</Place>
    <Place x={644} y={183} w={47}>Keesara</Place>
    <Place x={844} y={191} w={48}>Bhongir</Place>
    <Place x={757} y={231} w={57}>Bibinagar</Place>
    <Place x={654} y={254} w={60}>Ghatkesar</Place>
    <Place x={462} y={272} w={110} size={16} color="#262626">Secunderabad</Place>
    <Place x={447} y={342} w={91} size={17} color="#262626">Hyderabad</Place>
    <Place x={781} y={344} w={54}>Bhoodan</Place>
    <Place x={770} y={360} w={76}>Pochampally</Place>
    <Place x={842} y={443} w={70}>Choutuppal</Place>
    <Place x={215} y={620} w={64}>Shadnagar</Place>
    <Place x={-5} y={361} w={7}>d</Place>
    <Place x={505} y={165} w={61} size={14.5} color={purple}>Medchal-</Place>
    <Place x={504} y={184} w={70} size={14.5} color={purple}>Malkajgiri</Place>
    <Place x={888} y={217} w={48} size={12.8} color={purple} italic>Bhongiri</Place>
    <Place x={890} y={232} w={43} size={12.8} color={purple} italic>mandal</Place>
    <Place x={141} y={370} w={46} size={12.8} color={purple} italic>Chevella</Place>
    <Place x={143} y={385} w={43} size={12.8} color={purple} italic>mandal</Place>
    <Place x={570} y={493} w={89} size={12.8} color={purple} italic>Ibrahimpatnam</Place>
    <Place x={593} y={508} w={43} size={12.8} color={purple} italic>mandal</Place>
    <Place x={491} y={599} w={54} size={12.8} color={purple} italic>Kandukur</Place>
    <Place x={497} y={614} w={43} size={12.8} color={purple} italic>mandal</Place>
    <Place x={819} y={553} w={82} size={12.8} color={purple} italic>Narayanapoor</Place>
    <Place x={838} y={568} w={43} size={12.8} color={purple} italic>mandal</Place>
  </MapDrawing>
);

const TruckIcon = () => (
  <Truck viewBox="0 0 27 24">
    <path d="M13 2.6h11a2 2 0 0 1 2 2V14H12V3.6a1 1 0 0 1 1-1z" fill="#ffd43d" />
    <path d="M7 7.6h5V14H3z" fill="#dfe3ea" />
    <path d="M5.4 8H9l-1 5.6H2.4l1.4-4.4A1.8 1.8 0 0 1 5.4 8z" fill="#25c4fb" />
    <path d="M1 15.4l1.4-2H26v6a1.6 1.6 0 0 1-1.6 1.6H2.6A1.6 1.6 0 0 1 1 19.4z" fill="#ff822d" />
    <path d="M1 15h2v3H1z" fill="#ffe14d" />
    <path d="M24.4 15.4H26v3h-1.6z" fill="#e8263b" />
    <circle cx="7" cy="20" r="2.7" fill="#2b2350" />
    <circle cx="20" cy="20" r="2.7" fill="#2b2350" />
    <circle cx="7" cy="20" r="1.1" fill="#fff" />
    <circle cx="20" cy="20" r="1.1" fill="#fff" />
  </Truck>
);

const fields = [
  { label: 'Location Name*', placeholder: 'e.g., Warehouse A', hint: 'Give your location a unique name' },
  { label: 'Latitude*', placeholder: 'e.g., 17.3850', hint: 'Enter latitude in decimal degrees' },
  { label: 'Longitude*', placeholder: 'e.g., 78.4867', hint: 'Enter longitude in decimal degrees' },
];

const App = () => (
  <Page>
    <GlobalStyle />
    <Header>
      <Brand><TruckIcon />Smart Logistics Optimizer</Brand>
      <Nav>
        <NavLink>Home</NavLink>
        <NavLink>Dashboard</NavLink>
        <NavLink>Route Optimizer</NavLink>
      </Nav>
    </Header>
    <Main>
      <Column>
        <Card>
          <Title>Add Location</Title>
          {fields.map((f) => (
            <Field key={f.label}>
              <Label>{f.label}</Label>
              <Input placeholder={f.placeholder} />
              <Hint>{f.hint}</Hint>
            </Field>
          ))}
          <Button>
            <svg width="21" height="21" viewBox="0 0 21 21">
              <circle cx="10.5" cy="10.5" r="10.2" fill="#e0e0e0" />
              <path d="M10.5 6.2v8.6M6.2 10.5h8.6" stroke="#0f3460" strokeWidth="1.4" strokeLinecap="round" />
            </svg>
            Add Location
          </Button>
        </Card>
        <Card>
          <Title>Route Options</Title>
          <Label>Start Point*</Label>
          <Select />
        </Card>
      </Column>
      <Card $map>
        <MapView>
          <CityMap />
          <ZoomControl>
            <ZoomButton aria-label="Zoom in">
              <svg width="16" height="16" viewBox="0 0 16 16"><path d="M8 .5v15M.5 8h15" stroke="#000" strokeWidth="2.6" /></svg>
            </ZoomButton>
            <ZoomButton aria-label="Zoom out">
              <svg width="16" height="16" viewBox="0 0 16 16"><path d="M.5 8h15" stroke="#000" strokeWidth="2.2" /></svg>
            </ZoomButton>
          </ZoomControl>
          <Attribution>Leaflet</Attribution>
        </MapView>
      </Card>
    </Main>
  </Page>
);

export default App;
